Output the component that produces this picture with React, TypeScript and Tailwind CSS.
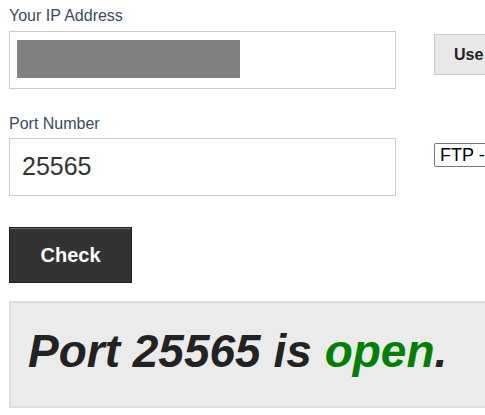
export default function App() {
  return (
    <div className="w-[485px] h-[415px] overflow-hidden bg-white font-['Liberation_Sans',Arial,sans-serif]">
      <div className="w-[700px] pl-[9px] pt-[7px]">
        {/* IP address row */}
        <p className="text-[16px] leading-[18px] text-[#3a4a66]">Your IP Address</p>
        <div className="mt-[6px] flex items-start gap-[38px]">
          <div className="w-[387px] h-[58px] border border-[#cccccc] bg-white pl-[7px] pt-[8px]">
            <div className="w-[223px] h-[38px] bg-[#808080]" />
          </div>
          <button className="mt-[3px] h-[41px] w-[120px] border border-[#cccccc] bg-[#e8e8e8] pl-[19px] text-left text-[16px] font-bold text-[#222222]">
            Use my IP
          </button>
        </div>

        {/* Port row */}
        <p className="mt-[26px] text-[16px] leading-[18px] text-[#3a4a66]">Port Number</p>
        <div className="mt-[5px] flex items-start gap-[38px]">
          <div className="w-[387px] h-[58px] border border-[#cccccc] bg-white pl-[12px] flex items-center">
            <span className="text-[25px] text-[#333333]">25565</span>
          </div>
          <div className="mt-[5px] h-[24px] w-[140px] rounded-[2px] border border-[#767676] bg-white pl-[5px] text-[18px] leading-[22px] text-black">
            FTP - 21
          </div>
        </div>

        {/* Check button */}
        <button className="mt-[31px] block h-[56px] w-[123px] border border-[#1e1e1e] bg-[#333333] text-[20px] font-bold text-white shadow-[inset_0_1px_0_#6a6a6a]">
          Check
        </button>

        {/* Result */}
        <div className="mt-[18px] h-[107px] w-[640px] border-2 border-[#dddddd] bg-[#ebebeb] pl-[17px] pt-[20px]">
          <p className="text-[46px] leading-[56px] font-bold italic text-[#222222]">
            Port 25565 is <span className="text-[#008000]">open</span>.
          </p>
        </div>
      </div>
    </div>
  );
}
